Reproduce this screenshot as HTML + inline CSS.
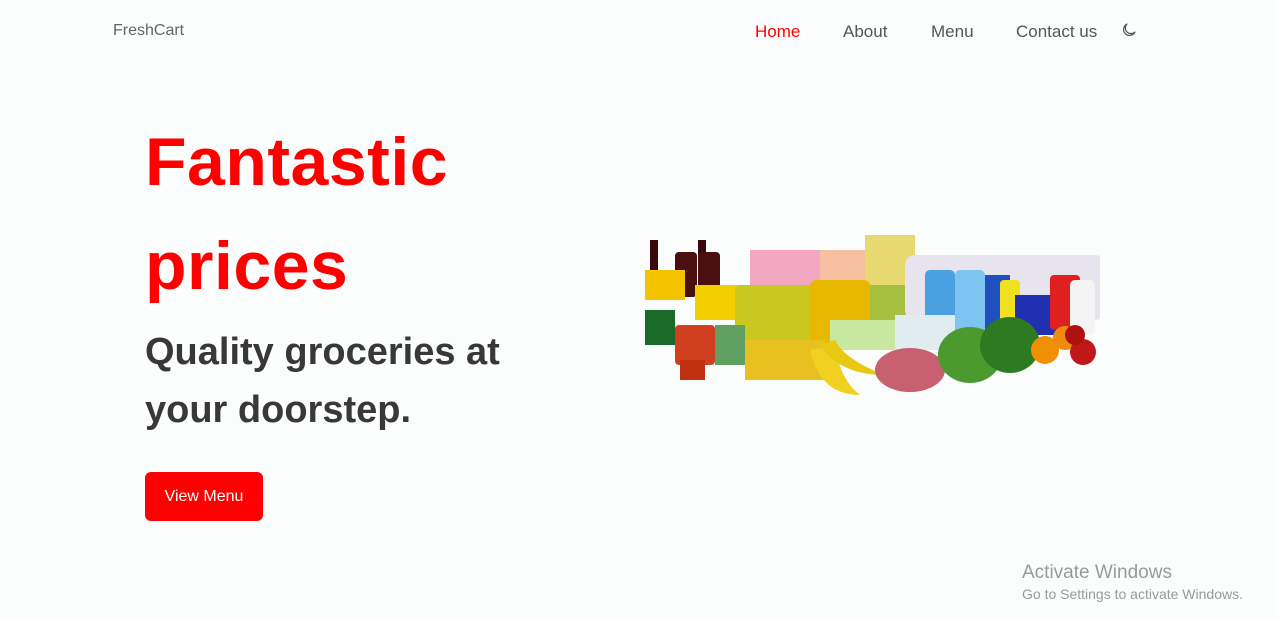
<!DOCTYPE html>
<html><head><meta charset="utf-8"><style>
html,body{margin:0;padding:0;}
body{width:1278px;height:619px;background:#fbfdfd;font-family:"Liberation Sans",sans-serif;position:relative;overflow:hidden;}
.nav a{position:absolute;top:22px;font-size:17px;color:#555;text-decoration:none;}
h1{position:absolute;left:145px;top:110px;margin:0;font-size:68px;line-height:104px;font-weight:700;color:#ff0000;letter-spacing:0.5px;}
h2{position:absolute;left:145px;top:323px;margin:0;font-size:38px;line-height:58px;font-weight:700;color:#383838;}
.btn{position:absolute;left:145px;top:472px;width:118px;height:49px;background:#ff0000;border-radius:6px;color:#fff;font-size:16px;line-height:49px;text-align:center;}
.aw{position:absolute;left:1022px;color:#9a9a9a;}
</style></head><body>
<div class="nav">
<a style="left:113px;color:#666;font-size:16px">FreshCart</a>
<a style="left:755px;color:#ff0000">Home</a>
<a style="left:843px">About</a>
<a style="left:931px">Menu</a>
<a style="left:1016px">Contact us</a>
</div>
<svg style="position:absolute;left:1121px;top:22px" width="16" height="16" viewBox="0 0 16 16"><path d="M6 2 A6 6 0 1 0 14 10 A5 5 0 0 1 6 2 Z" fill="none" stroke="#555" stroke-width="1.2" stroke-linejoin="round"/></svg>
<h1>Fantastic<br>prices</h1>
<h2>Quality groceries at<br>your doorstep.</h2>
<div class="btn">View Menu</div>
<svg style="position:absolute;left:640px;top:230px" width="460" height="180" viewBox="0 0 460 180">
<rect x="10" y="10" width="8" height="50" fill="#3a0a0a"/><rect x="58" y="10" width="8" height="50" fill="#3a0a0a"/>
<rect x="35" y="22" width="22" height="45" rx="4" fill="#4a0f0f"/><rect x="58" y="22" width="22" height="45" rx="4" fill="#4a0f0f"/>
<rect x="5" y="40" width="40" height="30" fill="#f5c400"/>
<rect x="55" y="55" width="45" height="35" fill="#f2d000"/>
<rect x="5" y="80" width="30" height="35" fill="#1a6a2a"/>
<rect x="110" y="20" width="70" height="40" fill="#f3a6c0"/>
<rect x="180" y="20" width="50" height="40" fill="#f6c0a0"/>
<rect x="225" y="5" width="50" height="50" fill="#e8d870"/>
<rect x="95" y="55" width="100" height="70" rx="6" fill="#c8c820"/>
<rect x="170" y="50" width="60" height="70" rx="6" fill="#e8b800"/>
<rect x="230" y="55" width="40" height="40" fill="#a8c040"/>
<rect x="265" y="25" width="200" height="65" rx="10" fill="#e8e4ee"/>
<rect x="285" y="40" width="30" height="65" rx="5" fill="#4aa0e0"/>
<rect x="315" y="40" width="30" height="65" rx="5" fill="#7ec4f0"/>
<rect x="345" y="45" width="25" height="60" fill="#2050c0"/>
<rect x="360" y="50" width="20" height="55" rx="4" fill="#f0e020"/>
<rect x="375" y="65" width="45" height="40" fill="#2030b0"/>
<rect x="410" y="45" width="30" height="55" rx="4" fill="#e02020"/>
<rect x="430" y="50" width="25" height="55" rx="5" fill="#f4f4f4"/>
<rect x="35" y="95" width="40" height="40" rx="4" fill="#d04020"/>
<rect x="75" y="95" width="30" height="40" fill="#60a060"/>
<rect x="40" y="130" width="25" height="20" fill="#c03010"/>
<rect x="105" y="110" width="80" height="40" fill="#e8c020"/>
<rect x="190" y="90" width="80" height="30" fill="#c8e8a0"/>
<rect x="255" y="85" width="60" height="35" fill="#e0ecf0"/>
<path d="M170 120 Q180 165 220 165 Q200 150 195 115 Z" fill="#f0d020"/>
<path d="M180 115 Q200 145 245 145 Q205 130 195 110Z" fill="#e8c810"/>
<ellipse cx="270" cy="140" rx="35" ry="22" fill="#c86070"/>
<ellipse cx="330" cy="125" rx="32" ry="28" fill="#4a9a30"/>
<ellipse cx="370" cy="115" rx="30" ry="28" fill="#2e7a20"/>
<circle cx="405" cy="120" r="14" fill="#f09000"/>
<circle cx="425" cy="108" r="12" fill="#f08a10"/>
<circle cx="443" cy="122" r="13" fill="#c01818"/>
<circle cx="435" cy="105" r="10" fill="#b01010"/>
</svg>
<div class="aw" style="top:562px;font-size:19px">Activate Windows</div>
<div class="aw" style="top:586px;font-size:14px">Go to Settings to activate Windows.</div>
</body></html>
